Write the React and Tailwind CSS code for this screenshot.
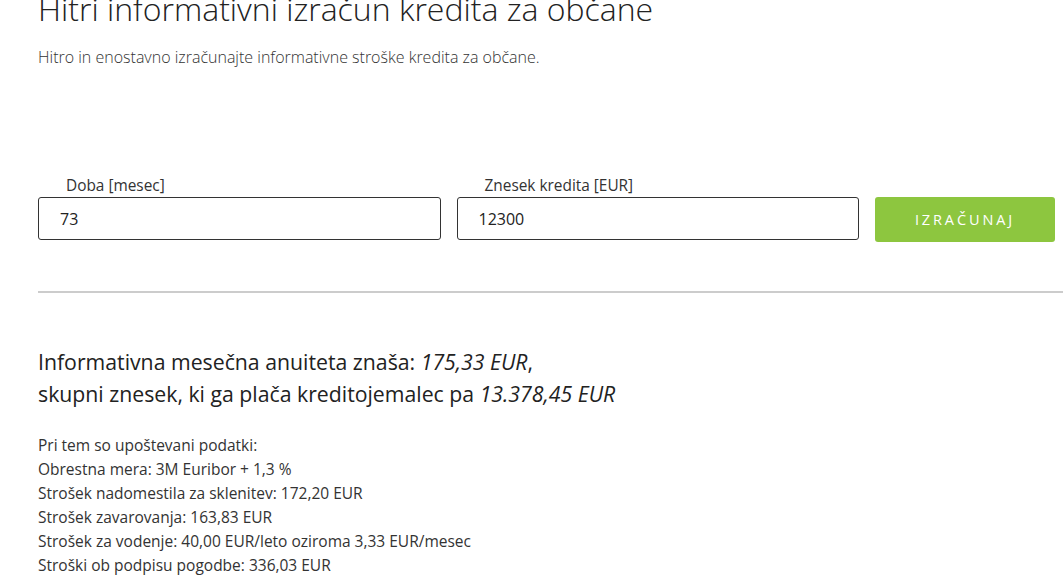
import React, { useState } from 'react';

function App() {
  const [doba, setDoba] = useState('73');
  const [znesek, setZnesek] = useState('12300');

  return (
    <div className="min-h-screen bg-white text-[#222] overflow-hidden" style={{ fontFamily: '"Open Sans", sans-serif' }}>
      <div className="pl-[38px]">
        <h1 className="-mt-[13px] text-[32px] leading-[44px] font-light text-[#222]">
          Hitri informativni izračun kredita za občane
        </h1>
        <p className="mt-[14px] text-[16px] leading-[24px] font-light text-[#333]">
          Hitro in enostavno izračunajte informativne stroške kredita za občane.
        </p>

        <form className="mt-[106px] flex items-start gap-4 pr-[8px]" onSubmit={(e) => e.preventDefault()}>
          <div className="flex-1">
            <label className="block pl-[28px] text-[15.4px] leading-[22px] text-[#333]">Doba [mesec]</label>
            <input
              value={doba}
              onChange={(e) => setDoba(e.target.value)}
              className="block w-full h-[43px] rounded-[3px] border border-[#333] px-[21px] text-[16px] text-[#222] outline-none"
            />
          </div>
          <div className="flex-1">
            <label className="block pl-[28px] text-[15.4px] leading-[22px] text-[#333]">Znesek kredita [EUR]</label>
            <input
              value={znesek}
              onChange={(e) => setZnesek(e.target.value)}
              className="block w-full h-[43px] rounded-[3px] border border-[#333] px-[21px] text-[16px] text-[#222] outline-none"
            />
          </div>
          <button
            type="submit"
            className="mt-[22px] w-[180px] h-[45px] rounded-[3px] bg-[#8dc63f] text-white text-[14.5px] tracking-[0.2em]"
          >
            IZRAČUNAJ
          </button>
        </form>

        <hr className="mt-[49px] border-0 h-[2px] bg-[#cccccc]" />

        <div className="mt-[53px] text-[21.25px] leading-[32px] text-[#222]">
          <p>
            Informativna mesečna anuiteta znaša: <em>175,33 EUR</em>,
          </p>
          <p>
            skupni znesek, ki ga plača kreditojemalec pa <em>13.378,45 EUR</em>
          </p>
        </div>

        <div className="mt-[23px] text-[15.5px] leading-[24px] text-[#333]">
          <p>Pri tem so upoštevani podatki:</p>
          <p>Obrestna mera: 3M Euribor + 1,3 %</p>
          <p>Strošek nadomestila za sklenitev: 172,20 EUR</p>
          <p>Strošek zavarovanja: 163,83 EUR</p>
          <p>Strošek za vodenje: 40,00 EUR/leto oziroma 3,33 EUR/mesec</p>
          <p>Stroški ob podpisu pogodbe: 336,03 EUR</p>
        </div>
      </div>
    </div>
  );
}

export default App;
